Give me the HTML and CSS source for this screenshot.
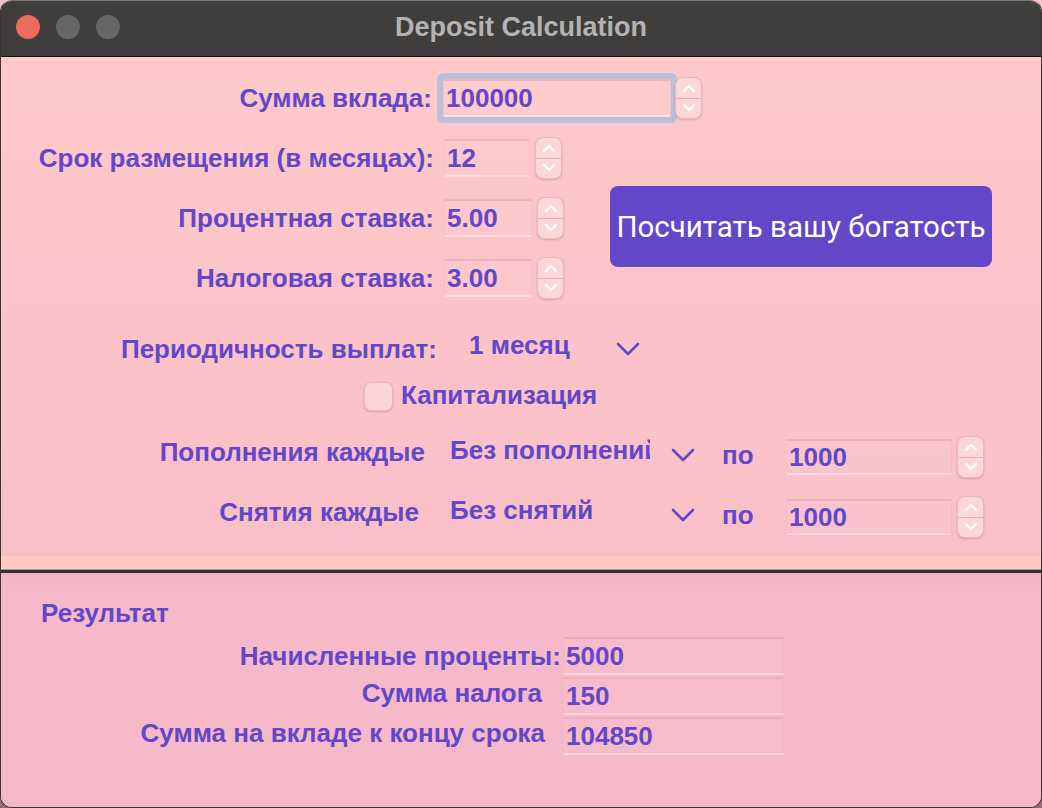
FILE: index.html
```html
<!DOCTYPE html>
<html lang="ru">
<head>
<meta charset="utf-8">
<title>Deposit Calculation</title>
<link rel="stylesheet" href="styles.css">
</head>
<body>
<div class="window">
  <div class="titlebar">
    <div class="lights">
      <span class="light red"></span>
      <span class="light gray"></span>
      <span class="light gray"></span>
    </div>
    <div class="title">Deposit Calculation</div>
  </div>

  <div class="top">
    <div class="upper">
      <div class="fields">
        <div class="row">
          <div class="label l1">Сумма вклада:</div>
          <div class="input wide focus">100000</div>
          <div class="stepper s1"><span class="up"><svg viewBox="0 0 14 8"><path d="M2 7 L7 2 L12 7"/></svg></span><span class="down"><svg viewBox="0 0 14 8"><path d="M2 1 L7 6 L12 1"/></svg></span></div>
        </div>
        <div class="row">
          <div class="label">Срок размещения (в месяцах):</div>
          <div class="input small">12</div>
          <div class="stepper"><span class="up"><svg viewBox="0 0 14 8"><path d="M2 7 L7 2 L12 7"/></svg></span><span class="down"><svg viewBox="0 0 14 8"><path d="M2 1 L7 6 L12 1"/></svg></span></div>
        </div>
        <div class="row">
          <div class="label">Процентная ставка:</div>
          <div class="input small2">5.00</div>
          <div class="stepper"><span class="up"><svg viewBox="0 0 14 8"><path d="M2 7 L7 2 L12 7"/></svg></span><span class="down"><svg viewBox="0 0 14 8"><path d="M2 1 L7 6 L12 1"/></svg></span></div>
        </div>
        <div class="row">
          <div class="label">Налоговая ставка:</div>
          <div class="input small2">3.00</div>
          <div class="stepper"><span class="up"><svg viewBox="0 0 14 8"><path d="M2 7 L7 2 L12 7"/></svg></span><span class="down"><svg viewBox="0 0 14 8"><path d="M2 1 L7 6 L12 1"/></svg></span></div>
        </div>
      </div>
      <button class="calc">Посчитать вашу богатость</button>
    </div>

    <div class="row period">
      <div class="label l-period">Периодичность выплат:</div>
      <div class="select sel-period">
        <span class="sel-text">1 месяц</span>
        <svg class="chev" viewBox="0 0 24 14"><path d="M2 2 L12 12 L22 2"/></svg>
      </div>
    </div>

    <div class="row capital">
      <span class="checkbox"></span>
      <span class="cb-label">Капитализация</span>
    </div>

    <div class="row extra">
      <div class="label l-add">Пополнения каждые</div>
      <div class="select sel-extra">
        <span class="sel-text clip">Без пополнений</span>
        <svg class="chev" viewBox="0 0 24 14"><path d="M2 2 L12 12 L22 2"/></svg>
      </div>
      <div class="po">по</div>
      <div class="input amount">1000</div>
      <div class="stepper"><span class="up"><svg viewBox="0 0 14 8"><path d="M2 7 L7 2 L12 7"/></svg></span><span class="down"><svg viewBox="0 0 14 8"><path d="M2 1 L7 6 L12 1"/></svg></span></div>
    </div>

    <div class="row extra">
      <div class="label l-take">Снятия каждые</div>
      <div class="select sel-extra">
        <span class="sel-text clip">Без снятий</span>
        <svg class="chev" viewBox="0 0 24 14"><path d="M2 2 L12 12 L22 2"/></svg>
      </div>
      <div class="po">по</div>
      <div class="input amount">1000</div>
      <div class="stepper"><span class="up"><svg viewBox="0 0 14 8"><path d="M2 7 L7 2 L12 7"/></svg></span><span class="down"><svg viewBox="0 0 14 8"><path d="M2 1 L7 6 L12 1"/></svg></span></div>
    </div>
  </div>

  <div class="band"></div>
  <div class="divider"></div>

  <div class="results">
    <div class="res-title">Результат</div>
    <div class="res-grid">
      <div class="res-label">Начисленные проценты:</div>
      <div class="res-field">5000</div>
      <div class="res-label nc">Сумма налога</div>
      <div class="res-field">150</div>
      <div class="res-label nc2">Сумма на вкладе к концу срока</div>
      <div class="res-field">104850</div>
    </div>
  </div>
</div>
</body>
</html>
```

FILE: styles.css
```css
html, body {
  margin: 0;
  padding: 0;
}
body {
  width: 1042px;
  height: 808px;
  background: linear-gradient(#f3c4c6, #f3c4c6 60%, #9a6a7a);
  font-family: "Liberation Sans", Arial, sans-serif;
  overflow: hidden;
}
.window {
  width: 1042px;
  height: 808px;
  box-sizing: border-box;
  border: 1px solid #3a3434;
  border-top-color: #7a7876;
  border-radius: 12px;
  overflow: hidden;
  display: flex;
  flex-direction: column;
  background: #f6b9c9;
}
.titlebar {
  height: 55px;
  background: #3f3e3d;
  border-bottom: 1px solid #111;
  display: flex;
  align-items: center;
  justify-content: center;
  position: relative;
  flex: none;
}
.lights {
  position: absolute;
  left: 15px;
  top: 14px;
  display: flex;
  gap: 16px;
}
.light {
  width: 24px;
  height: 24px;
  border-radius: 50%;
  display: block;
}
.light.red { background: #ec6a5e; }
.light.gray { background: #676665; }
.title {
  color: #b3b3b3;
  font-weight: bold;
  font-size: 27px;
  margin-top: -2px;
}

/* top section */
.top {
  height: 499px;
  flex: none;
  background: linear-gradient(#fec9c9, #f9bfc8);
  padding-top: 11px;
  box-sizing: border-box;
  color: #6347c9;
  font-weight: bold;
  font-size: 26px;
}
.upper {
  display: flex;
  align-items: flex-start;
}
.fields {
  display: flex;
  flex-direction: column;
  width: 580px;
  flex: none;
}
.row {
  display: flex;
  align-items: center;
  height: 60px;
}
.label {
  width: 433px;
  text-align: right;
  flex: none;
  white-space: nowrap;
}
.label.l1 {
  width: 431px;
}
.input {
  box-sizing: border-box;
  height: 38px;
  margin-left: 10px;
  padding-left: 2px;
  display: flex;
  align-items: center;
  background: rgba(255, 255, 255, 0.06);
  border-top: 2px solid rgba(205, 130, 138, 0.28);
  border-bottom: 2px solid rgba(255, 235, 235, 0.55);
  border-left: 1px solid rgba(205, 130, 138, 0.12);
  border-right: 1px solid rgba(205, 130, 138, 0.12);
  white-space: nowrap;
  flex: none;
}
.input.wide {
  width: 228px;
  margin-left: 11px;
  border-radius: 2px;
}
.input.focus {
  box-shadow: 0 0 0 6px #b9bfdc;
}
.input.small { width: 86px; }
.input.small2 { width: 88px; }
.input.amount {
  width: 166px;
  height: 36px;
  margin-left: 0;
}
.stepper {
  box-sizing: border-box;
  width: 27px;
  height: 42px;
  margin-left: 5px;
  border-radius: 8px;
  background: #fdd6d6;
  border: 1px solid rgba(200, 130, 135, 0.35);
  box-shadow: 0 1px 2px rgba(120, 60, 70, 0.25);
  display: flex;
  flex-direction: column;
  flex: none;
}
.stepper.s1 {
  margin-left: 4px;
}
.stepper span {
  flex: 1;
  display: flex;
  align-items: center;
  justify-content: center;
}
.stepper .up {
  border-bottom: 1px solid rgba(200, 130, 135, 0.45);
}
.stepper svg {
  width: 14px;
  height: 8px;
  fill: none;
  stroke: #ffffff;
  stroke-width: 2.4;
  stroke-linecap: round;
  stroke-linejoin: round;
}
.calc {
  flex: none;
  margin: 118px 49px 0 auto;
  width: 382px;
  height: 81px;
  border: none;
  border-radius: 8px;
  background: #6347c9;
  color: #ffffff;
  font-family: Roboto, "Liberation Sans", sans-serif;
  font-size: 29.5px;
  font-weight: normal;
  padding: 0;
  white-space: nowrap;
}

/* lower rows */
.row.period {
  height: 44px;
  margin-top: 19px;
}
.label.l-period {
  width: 436px;
}
.select {
  display: flex;
  align-items: center;
  flex: none;
}
.sel-text {
  white-space: nowrap;
  margin-top: -8px;
}
.sel-period {
  margin-left: 32px;
}
.sel-period .sel-text {
  width: 147px;
}
.chev {
  width: 24px;
  height: 14px;
  fill: none;
  stroke: #6347c9;
  stroke-width: 2.6;
  stroke-linecap: round;
  stroke-linejoin: round;
}
.row.capital {
  height: 44px;
  margin-top: 3px;
  padding-left: 363px;
}
.checkbox {
  box-sizing: border-box;
  width: 29px;
  height: 29px;
  border-radius: 7px;
  background: #fdd4d7;
  border: 1px solid rgba(200, 130, 135, 0.35);
  box-shadow: 0 1px 2px rgba(120, 60, 70, 0.25);
  flex: none;
}
.cb-label {
  margin-left: 8px;
  margin-top: -2px;
}
.row.extra {
  height: 60px;
}
.capital + .extra {
  margin-top: 9px;
}
.l-add { width: 436px; padding-right: 12px; box-sizing: border-box; margin-top: -10px; }
.l-take { width: 436px; padding-right: 18px; box-sizing: border-box; margin-top: -10px; }
.sel-extra {
  margin-left: 13px;
}
.sel-extra .sel-text {
  margin-top: -14px;
}
.clip {
  width: 200px;
  overflow: hidden;
}
.sel-extra .chev {
  margin-left: 21px;
  margin-top: -4px;
}
.po {
  width: 64px;
  margin-left: 27px;
  margin-top: -4px;
}

/* separator */
.band {
  height: 13px;
  background: #fdc9c7;
  flex: none;
}
.divider {
  height: 3px;
  background: #333131;
  border-top: 1px solid #a09a9a;
  flex: none;
}

/* results */
.results {
  flex: 1;
  background: linear-gradient(#f2b3c3, #f6b9c9 16px, #f6b9c9);
  color: #6347c9;
  font-weight: bold;
  font-size: 26px;
  padding-top: 26px;
}
.res-title {
  padding-left: 40px;
  line-height: 28px;
}
.res-grid {
  display: grid;
  grid-template-columns: 562px 221px;
  grid-auto-rows: 38px;
  row-gap: 2px;
  margin-top: 10px;
  align-items: center;
}
.res-label {
  text-align: right;
  padding-right: 2px;
  white-space: nowrap;
}
.res-label.nc { padding-right: 21px; margin-top: -6px; }
.res-label.nc2 { padding-right: 18px; margin-top: -6px; }
.res-field {
  height: 38px;
  box-sizing: border-box;
  padding-left: 2px;
  display: flex;
  align-items: center;
  background: rgba(255, 255, 255, 0.05);
  border-top: 2px solid rgba(205, 130, 138, 0.25);
  border-bottom: 2px solid rgba(255, 235, 240, 0.5);
  border-left: 1px solid rgba(205, 130, 138, 0.1);
  border-right: 1px solid rgba(205, 130, 138, 0.1);
}
```
